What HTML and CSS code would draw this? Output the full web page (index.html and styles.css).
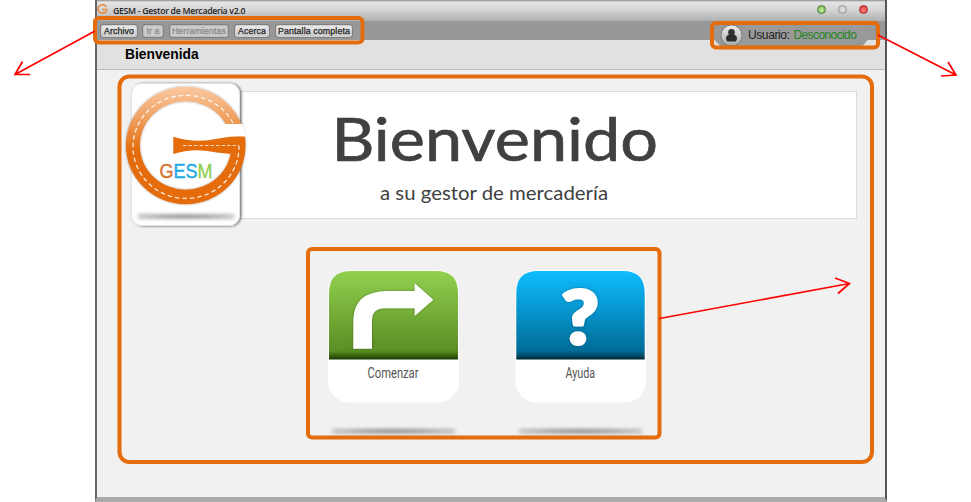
FILE: index.html
```html
<!DOCTYPE html>
<html lang="es">
<head>
<meta charset="utf-8">
<title>GESM - Gestor de Mercaderia v2.0</title>
<link rel="stylesheet" href="styles.css">
</head>
<body>
<div class="window">
  <header class="titlebar">
    <svg class="app-icon" viewBox="0 0 12 12"><path d="M10.300 3A5 4.500 0 1 0 11 6H5.500" fill="none" stroke="#e58a43" stroke-width="1.700"/></svg>
    <span class="app-title">GESM - Gestor de Mercaderia v2.0</span>
    <div class="controls"><i class="dot green"></i><i class="dot gray"></i><i class="dot red"></i></div>
  </header>
  <nav class="menubar">
    <button class="menu archivo"><span>Archivo</span></button>
    <button class="menu ira off"><span>Ir a</span></button>
    <button class="menu herr off"><span>Herramientas</span></button>
    <button class="menu acerca"><span>Acerca</span></button>
    <button class="menu pantalla"><span>Pantalla completa</span></button>
    <div class="user">
      <svg class="avatar" viewBox="0 0 24 24">
        <defs><linearGradient id="av" x1="0" y1="0" x2="0" y2="1"><stop offset="0" stop-color="#eee"/><stop offset="1" stop-color="#aaa"/></linearGradient></defs>
        <circle cx="12" cy="12" r="11" fill="url(#av)" stroke="#777"/>
        <circle cx="12" cy="8.600" r="3.500" fill="#333"/>
        <path d="M9.800 10.500h4.400c.3 1.300 3.400 1 3.500 4.300q0 2.900-1.500 3.400h-8.400q-1.500-.5-1.500-3.400c.1-3.300 3.200-3 3.500-4.300z" fill="#2d2d2d"/>
      </svg>
      <span class="user-label">Usuario:</span><span class="user-name">Desconocido</span>
    </div>
  </nav>
  <div class="heading"><h1>Bienvenida</h1></div>
  <main class="content">
    <section class="hero">
      <svg class="logo" viewBox="120 78 135 155">
        <defs>
          <linearGradient id="ring" x1="0" y1="0" x2="0" y2="1"><stop offset="0" stop-color="#fac8a0"/><stop offset=".25" stop-color="#f0a365"/><stop offset=".55" stop-color="#e46c0a"/><stop offset="1" stop-color="#e46c0a"/></linearGradient>
          <radialGradient id="shade"><stop offset="0" stop-color="#999"/><stop offset=".5" stop-color="#aaa"/><stop offset="1" stop-color="#ccc"/></radialGradient>
          <filter id="soft" x="-20%" y="-100%" width="140%" height="300%"><feGaussianBlur stdDeviation="2.200 1.500"/></filter>
          <filter id="drop" x="-20%" y="-20%" width="140%" height="140%"><feDropShadow dx="1.500" dy=".3" stdDeviation="1" flood-color="#000" flood-opacity=".55"/></filter>
          <filter id="faint" x="-20%" y="-20%" width="140%" height="140%"><feDropShadow dx="0" dy="0" stdDeviation=".8" flood-color="#000" flood-opacity=".4"/></filter>
        </defs>
        <rect x="131.500" y="83.500" width="108" height="142" rx="10" fill="#fff" stroke="#e2e2e2" filter="url(#drop)"/>
        <rect x="138" y="213.500" width="96" height="6" fill="url(#shade)" filter="url(#soft)"/>
        <path d="M185.700 86.800a59.800 58.700 0 1 0 0 117.400a59.800 58.700 0 1 0 0-117.400zM185.700 101.300a45.800 44.200 0 1 1 0 88.400a45.800 44.200 0 1 1 0-88.400z" fill="url(#ring)" filter="url(#faint)"/>
        <path d="M224 124H242.500L246 136.700H222z" fill="#fff"/>
        <path d="M173.300 136.700Q195 143.500 217 138.800Q231 136 245 136.700Q246 147 242 158L231 154Q218 153 207 151Q190 148.500 173.300 154z" fill="#e46c0a"/>
        <path d="M233 123A53 51.600 0 1 0 239 146" fill="none" stroke="#fff" stroke-opacity=".85" stroke-width="1.300" stroke-dasharray="4.500 3"/>
        <path d="M183 145.500H239" stroke="#fbd6b8" stroke-width="1.200" stroke-dasharray="3.500 2"/>
        <text class="logo-text" x="159.500" y="177.500" textLength="53" lengthAdjust="spacingAndGlyphs"><tspan fill="#d97335" stroke="#d97335">G</tspan><tspan fill="#1baae3" stroke="#1baae3">ES</tspan><tspan fill="#92d050" stroke="#92d050">M</tspan></text>
      </svg>
      <svg class="hero-text" viewBox="255 92 602 126">
        <text class="hero-title" x="332.500" y="161" textLength="326.500" lengthAdjust="spacingAndGlyphs">Bienvenido</text>
        <text class="hero-sub" x="381" y="200" textLength="228" lengthAdjust="spacingAndGlyphs">a su gestor de mercadería</text>
      </svg>
    </section>
    <section class="tiles">
      <svg class="tile" viewBox="326 268 135 170">
        <defs>
          <linearGradient id="gg" x1="0" y1="0" x2="0" y2="1"><stop offset="0" stop-color="#92d050"/><stop offset=".4" stop-color="#79b33c"/><stop offset=".9" stop-color="#5a8f24"/><stop offset=".96" stop-color="#38620d"/><stop offset="1" stop-color="#1d3604"/></linearGradient>
        </defs>
        <rect x="328" y="270" width="131" height="132.500" rx="21" fill="#fff"/>
        <path d="M329 359.500V293Q329 271 351 271H436Q458 271 458 293V359.500z" fill="url(#gg)"/>
        <path d="M353.300 348.700V320Q354 292 386 291H414.700V283.300L433.300 299.700L414.700 316V308.300H385Q372 308.500 372 320V348.700z" fill="#fff" filter="url(#faint)"/>
        <text class="tile-label" x="367.500" y="378" textLength="51" lengthAdjust="spacingAndGlyphs">Comenzar</text>
        <rect x="332" y="428" width="123" height="6.500" fill="url(#shade)" filter="url(#soft)"/>
      </svg>
      <svg class="tile" viewBox="514 268 135 170">
        <defs>
          <linearGradient id="bg" x1="0" y1="0" x2="0" y2="1"><stop offset="0" stop-color="#0fbcff"/><stop offset=".5" stop-color="#0590c7"/><stop offset=".9" stop-color="#006c97"/><stop offset=".95" stop-color="#00506f"/><stop offset="1" stop-color="#00222f"/></linearGradient>
        </defs>
        <rect x="515.500" y="270" width="130.500" height="132.500" rx="21" fill="#fff"/>
        <path d="M516.300 359.500V293Q516.300 271 538 271H623Q644.700 271 644.700 293V359.500z" fill="url(#bg)"/>
        <text class="question" x="561" y="343.500" textLength="38" lengthAdjust="spacingAndGlyphs" filter="url(#faint)">?</text>
        <text class="tile-label" x="565.500" y="378" textLength="29.500" lengthAdjust="spacingAndGlyphs">Ayuda</text>
        <rect x="519" y="428" width="123" height="6.500" fill="url(#shade)" filter="url(#soft)"/>
      </svg>
    </section>
  </main>
</div>
<svg class="callouts" viewBox="0 0 971 502">
  <g fill="none" stroke="#e46c0a" stroke-width="4">
    <rect x="95" y="18" width="267.500" height="24.500" rx="4"/>
    <rect x="712" y="23" width="166" height="24.500" rx="4"/>
    <rect x="119.500" y="76.500" width="752.500" height="385.500" rx="10"/>
    <rect x="308" y="249" width="351.500" height="188.500" rx="4"/>
  </g>
  <g fill="none" stroke="#f00" stroke-width="1.700">
    <path d="M95 31L15 74.500M22.500 61.500L15 74.500H30"/>
    <path d="M878 35L956 75M948 62L956 75L941 76"/>
    <path d="M659.500 318.500L849.500 283.500M835 278L849.500 283.500L838 293.500"/>
  </g>
</svg>
</body>
</html>
```
FILE: styles.css
```css
* { box-sizing: border-box; }
body { margin: 0; width: 971px; height: 502px; overflow: hidden; background: #fff; font-family: "Liberation Sans", Arial, sans-serif; color: #111; }
.window { width: 792px; height: 502px; margin-left: 95px; display: flex; flex-direction: column; background: #f1f1f1; border: solid #555; border-width: 0 2px; border-bottom: 5px solid #aaa; border-left-color: #63666a; }
.titlebar { height: 21px; flex: none; display: flex; align-items: center; background: linear-gradient(#8d8d8d 0, #e4e4e4 2px, #d6d6d6 45%, #afafaf 100%); }
.app-icon { width: 11px; height: 11px; margin: -3px 3px 0 0; }
.app-title { font: 600 8.7px "Open Sans", sans-serif; white-space: nowrap; letter-spacing: -.28px; margin-top: 1px; color: #222; margin-left: 2px; }
.controls { margin-left: auto; margin-right: 17px; margin-top: -3px; display: flex; gap: 12px; }
.dot { width: 9px; height: 9px; border-radius: 50%; border: 1px solid #777; }
.green { background: radial-gradient(circle at 50% 60%, #c9f3a2, #65a943); border-color: #4c7c35; }
.gray { background: radial-gradient(#e4e4e4, #bbb); border-color: #999; }
.red { background: radial-gradient(circle at 50% 60%, #ff8580, #d52424); border-color: #a93030; }
.menubar { height: 19px; flex: none; display: flex; align-items: center; background: #989898; padding-left: 4px; }
.menu { height: 12px; flex: none; padding: 0; border: 1px solid #d2d2d2; outline: 1px solid #808080; border-radius: 2px; background: linear-gradient(#e8e8e8, #ccc); display: flex; align-items: center; justify-content: center; font: 8.800px "Liberation Sans", sans-serif; letter-spacing: .12px; -webkit-text-stroke: .25px; color: #222; white-space: nowrap; }
.off { color: #888; background: #cbcbcb; border-color: #bbb; }
.archivo { width: 36px; margin-right: 6px; }
.ira { width: 20px; margin-right: 7px; }
.herr { width: 58px; margin-right: 7px; }
.acerca { width: 34px; margin-right: 7px; }
.pantalla { width: 76px; }
.user { margin-left: auto; margin-right: 16px; margin-top: 9px; width: 156px; height: 23px; flex: none; display: flex; align-items: center; background: #999; clip-path: polygon(0 0, 100% 0, 100% 15px, 149px 100%, 8px 100%, 0 15px); font-size: 12px; color: #222; }
.avatar { width: 23px; height: 23px; margin-left: 7px; }
.user-label { margin-left: 5px; letter-spacing: -.4px; }
.user-name { margin-left: 4px; color: #248424; letter-spacing: -.6px; }
.heading { height: 30px; flex: none; background: #e1e1e1; border-bottom: 1px solid #bbb; padding: 6px 0 0 28px; }
h1 { margin: 0; font-size: 13.800px; line-height: 17px; color: #000; }
.content { flex: 1; padding-top: 8px; }
.hero { display: flex; align-items: flex-start; margin-left: 23px; }
.logo { width: 135px; height: 155px; flex: none; z-index: 1; }
.logo-text { font: 19.500px "Liberation Sans", sans-serif; stroke-width: .4px; }
.hero-text { width: 618px; height: 128px; margin: 13px 0 0 -16px; padding-left: 15px; background: #fff; border: 1px solid #dcdcdc; border-left: 0; }
.hero-title { font: 60px Lato, sans-serif; fill: #404040; stroke: #404040; stroke-width: .7px; }
.hero-sub { font: 20px Lato, sans-serif; fill: #404040; }
.tiles { display: flex; gap: 53px; margin: 35px 0 0 229px; }
.tile { width: 135px; height: 170px; flex: none; }
.tile-label { font: 14.500px Roboto, sans-serif; fill: #555; }
.question { font: 900 75px Lato, sans-serif; fill: #fff; stroke: #fff; stroke-width: 3px; stroke-linejoin: round; }
.callouts { position: absolute; left: 0; top: 0; width: 971px; height: 502px; pointer-events: none; }
```
